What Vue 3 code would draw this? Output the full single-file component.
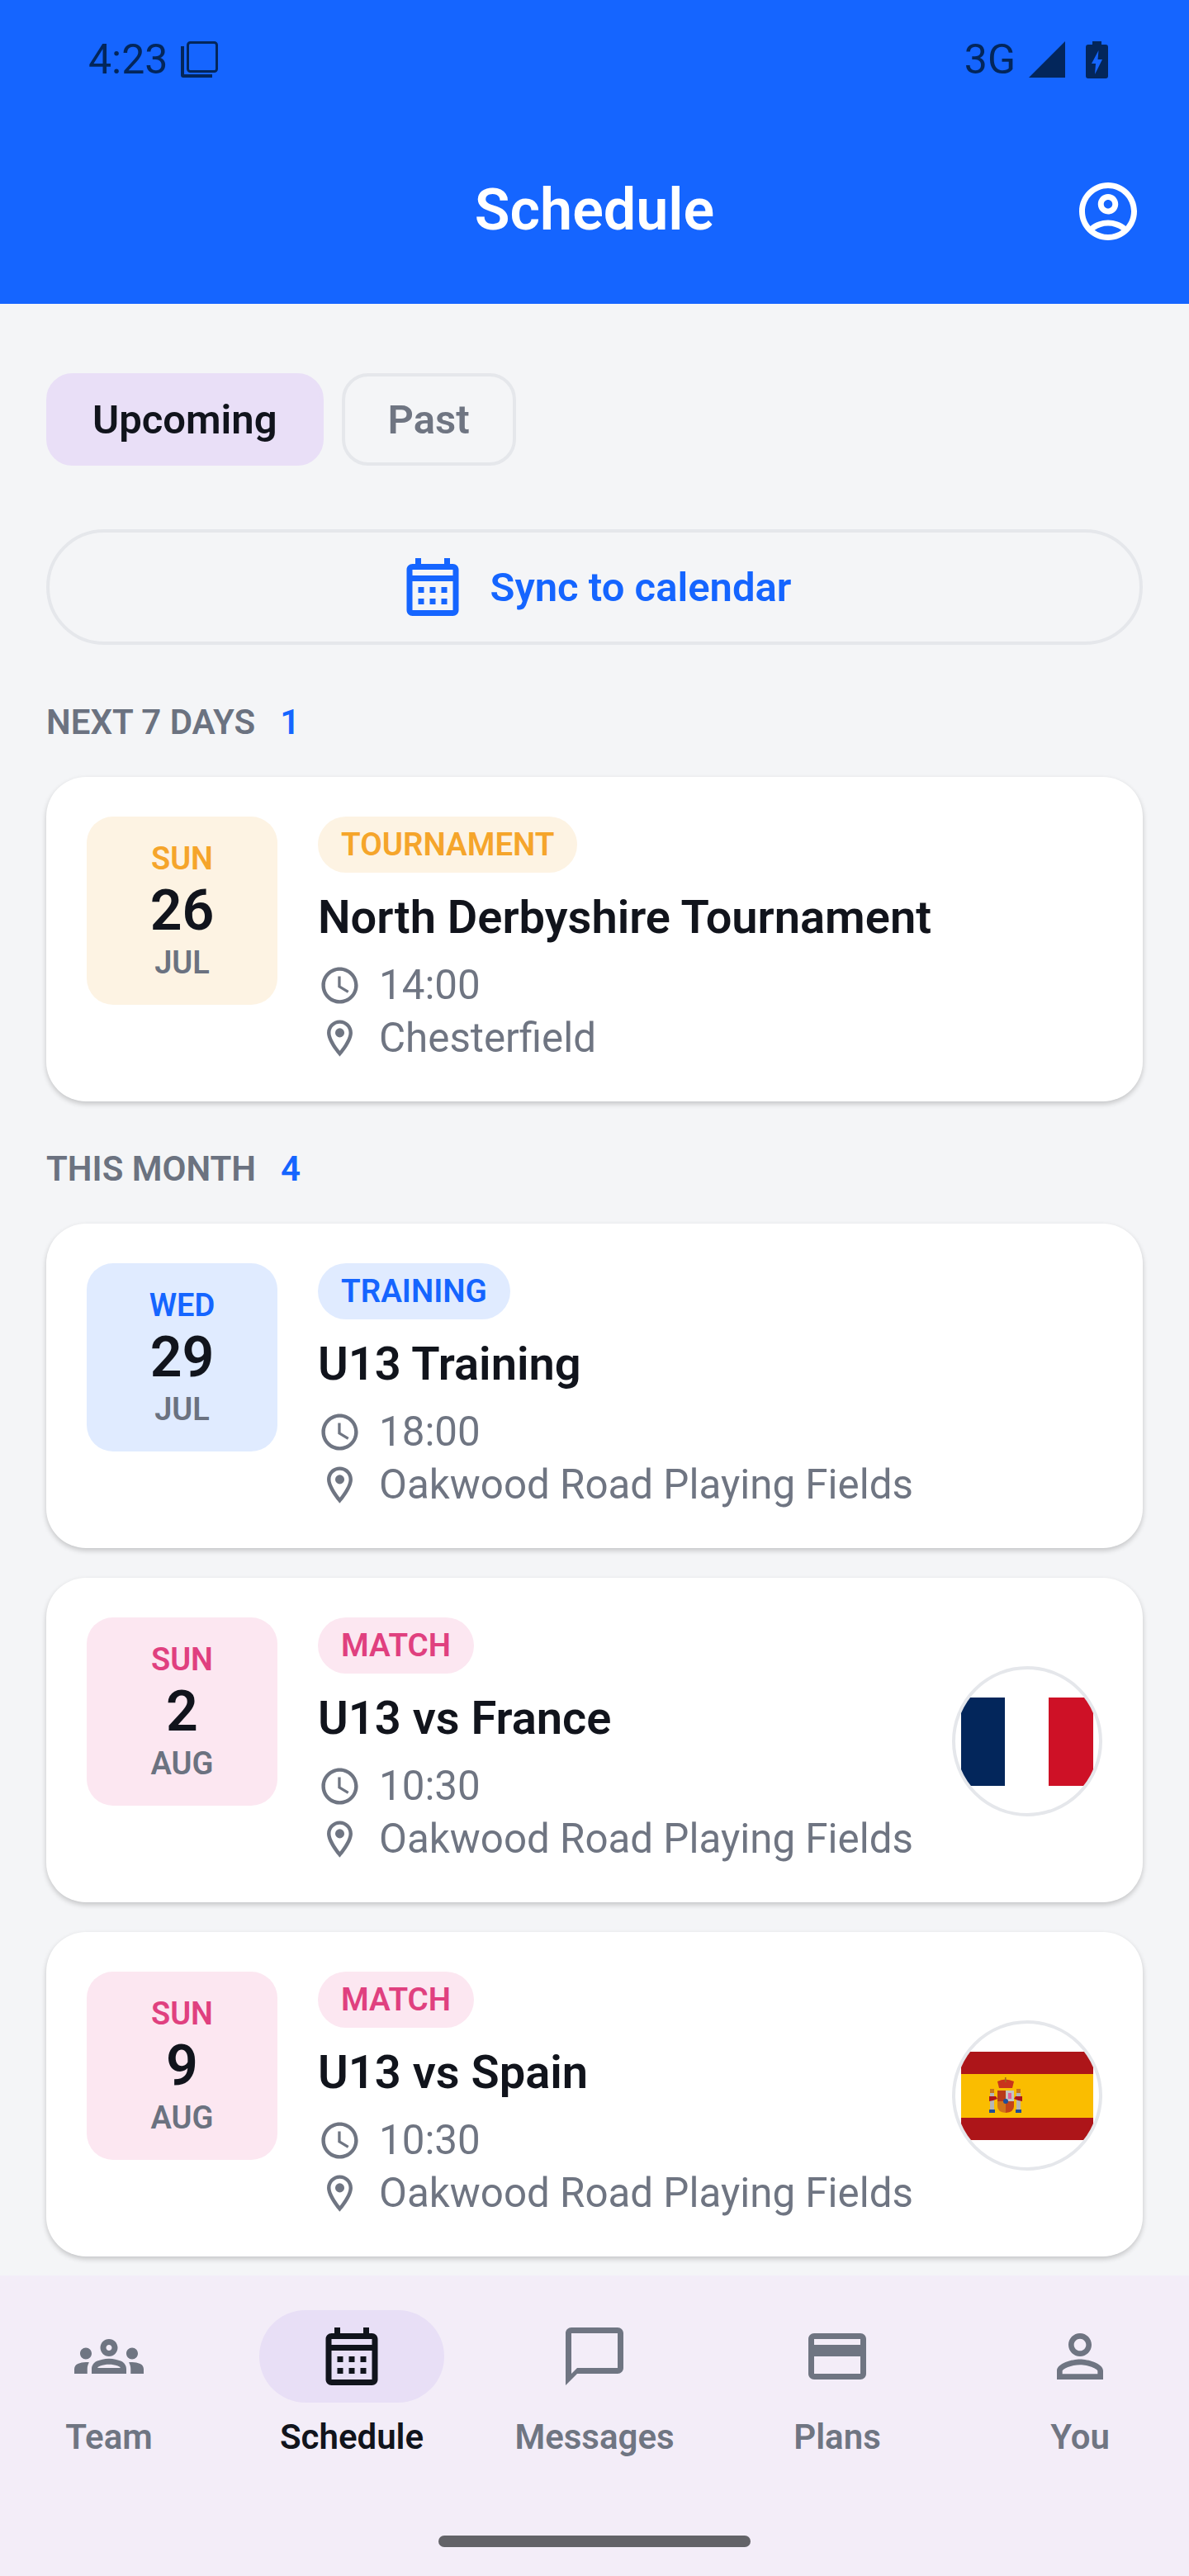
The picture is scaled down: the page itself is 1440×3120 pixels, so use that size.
<script setup>
const paths = {
  calendar: 'M19 4h-1V2h-2v2H8V2H6v2H5c-1.1 0-2 .9-2 2v14c0 1.1.9 2 2 2h14c1.1 0 2-.9 2-2V6c0-1.1-.9-2-2-2zm0 16H5V10h14v10zm0-12H5V6h14v2zM9 14H7v-2h2v2zm4 0h-2v-2h2v2zm4 0h-2v-2h2v2zm-8 4H7v-2h2v2zm4 0h-2v-2h2v2zm4 0h-2v-2h2v2z',
  account: 'M12 2C6.48 2 2 6.48 2 12s4.48 10 10 10 10-4.48 10-10S17.52 2 12 2zM7.35 18.5C8.66 17.56 10.26 17 12 17s3.34.56 4.65 1.5C15.34 19.44 13.74 20 12 20s-3.34-.56-4.65-1.5zm10.79-1.38C16.45 15.8 14.32 15 12 15s-4.45.8-6.14 2.12C4.7 15.73 4 13.95 4 12c0-4.42 3.58-8 8-8s8 3.58 8 8c0 1.95-.7 3.73-1.86 5.12zM12 6c-1.93 0-3.5 1.57-3.5 3.5S10.07 13 12 13s3.5-1.57 3.5-3.5S13.93 6 12 6zm0 5c-.83 0-1.5-.67-1.5-1.5S11.17 8 12 8s1.5.67 1.5 1.5S12.83 11 12 11z',
  clock: 'M11.99 2C6.47 2 2 6.48 2 12s4.47 10 9.99 10C17.52 22 22 17.52 22 12S17.52 2 11.99 2zM12 20c-4.42 0-8-3.58-8-8s3.58-8 8-8 8 3.58 8 8-3.58 8-8 8zM12.5 7H11v6l5.25 3.15.75-1.23-4.5-2.67z',
  pin: 'M12 2C8.13 2 5 5.13 5 9c0 5.25 7 13 7 13s7-7.75 7-13c0-3.87-3.13-7-7-7zM7 9c0-2.76 2.24-5 5-5s5 2.24 5 5c0 2.88-2.88 7.19-5 9.88C9.92 16.21 7 11.85 7 9zM12 6.5a2.5 2.5 0 1 0 0 5 2.5 2.5 0 0 0 0-5z',
  groups: 'M4 13c1.1 0 2-.9 2-2 0-1.1-.9-2-2-2s-2 .9-2 2c0 1.1.9 2 2 2zm1.13 1.1C4.76 14.04 4.39 14 4 14c-.99 0-1.93.21-2.78.58C.48 14.9 0 15.62 0 16.43V18h4.5v-1.61c0-.83.23-1.61.63-2.29zM20 13c1.1 0 2-.9 2-2 0-1.1-.9-2-2-2s-2 .9-2 2c0 1.1.9 2 2 2zm4 3.43c0-.81-.48-1.53-1.22-1.85C21.93 14.21 20.99 14 20 14c-.39 0-.76.04-1.13.1.4.68.63 1.46.63 2.29V18H24v-1.57zm-7.76-2.78c-1.17-.52-2.61-.9-4.24-.9s-3.07.39-4.24.9C6.68 14.13 6 15.21 6 16.39V18h12v-1.61c0-1.18-.68-2.26-1.76-2.74zM8.07 16c.09-.23.13-.39.91-.69.97-.38 1.99-.56 3.02-.56s2.05.18 3.02.56c.77.3.81.46.91.69H8.07zM12 8c.55 0 1 .45 1 1s-.45 1-1 1-1-.45-1-1 .45-1 1-1m0-2c-1.66 0-3 1.34-3 3s1.34 3 3 3 3-1.34 3-3-1.34-3-3-3z',
  chat: 'M20 2H4c-1.1 0-2 .9-2 2v18l4-4h14c1.1 0 2-.9 2-2V4c0-1.1-.9-2-2-2zm0 14H6l-2 2V4h16v12z',
  card: 'M20 4H4c-1.11 0-1.99.89-1.99 2L2 18c0 1.11.89 2 2 2h16c1.11 0 2-.89 2-2V6c0-1.11-.89-2-2-2zm0 14H4v-6h16v6zm0-10H4V6h16v2z',
  person: 'M12 5.9c1.16 0 2.1.94 2.1 2.1s-.94 2.1-2.1 2.1S9.9 9.16 9.9 8s.94-2.1 2.1-2.1m0 9c2.97 0 6.1 1.46 6.1 2.1v1.1H5.9V17c0-.64 3.13-2.1 6.1-2.1M12 4C9.79 4 8 5.79 8 8s1.79 4 4 4 4-1.79 4-4-1.79-4-4-4zm0 9c-2.67 0-8 1.34-8 4v3h16v-3c0-2.66-5.33-4-8-4z'
}

const sections = [
  {
    label: 'NEXT 7 DAYS',
    count: 1,
    events: [
      { day: 'SUN', num: 26, month: 'JUL', kind: 'tournament', tag: 'TOURNAMENT', title: 'North Derbyshire Tournament', time: '14:00', place: 'Chesterfield' }
    ]
  },
  {
    label: 'THIS MONTH',
    count: 4,
    events: [
      { day: 'WED', num: 29, month: 'JUL', kind: 'training', tag: 'TRAINING', title: 'U13 Training', time: '18:00', place: 'Oakwood Road Playing Fields' },
      { day: 'SUN', num: 2, month: 'AUG', kind: 'match', tag: 'MATCH', title: 'U13 vs France', time: '10:30', place: 'Oakwood Road Playing Fields', flag: 'fr' },
      { day: 'SUN', num: 9, month: 'AUG', kind: 'match', tag: 'MATCH', title: 'U13 vs Spain', time: '10:30', place: 'Oakwood Road Playing Fields', flag: 'es' }
    ]
  }
]

const tabs = [
  { label: 'Team', icon: 'groups' },
  { label: 'Schedule', icon: 'calendar', active: true },
  { label: 'Messages', icon: 'chat' },
  { label: 'Plans', icon: 'card' },
  { label: 'You', icon: 'person' }
]
</script>

<template>
  <div class="screen">
    <header class="top">
      <div class="status">
        <div class="status-side">
          <span>4:23</span>
          <svg class="shot-icon" viewBox="0 0 45 44">
            <rect x="8.5" y="1.5" width="35" height="35" rx="3" fill="none" stroke="currentColor" stroke-width="3" />
            <path d="M0 6h4v34h34v4H3a3 3 0 0 1-3-3z" fill="currentColor" />
          </svg>
        </div>
        <div class="status-side">
          <span>3G</span>
          <svg class="signal-icon" viewBox="0 0 44 44"><path d="M44 0v44H0z" fill="currentColor" /></svg>
          <svg class="battery-icon" viewBox="0 0 27 45">
            <path d="M8 0h11v4h5a3 3 0 0 1 3 3v35a3 3 0 0 1-3 3H3a3 3 0 0 1-3-3V7a3 3 0 0 1 3-3h5z" fill="currentColor" />
            <path d="M15.5 11 7 27h5l-1 13 9-18h-5.500z" fill="#1565ff" />
          </svg>
        </div>
      </div>
      <div class="title-row">
        <h1>Schedule</h1>
        <svg class="profile" viewBox="0 0 24 24"><path :d="paths.account" fill="currentColor" /></svg>
      </div>
    </header>

    <main class="content">
      <div class="filters">
        <button class="chip chip-on">Upcoming</button>
        <button class="chip">Past</button>
      </div>

      <button class="sync">
        <svg viewBox="0 0 24 24"><path :d="paths.calendar" fill="currentColor" /></svg>
        Sync to calendar
      </button>

      <section v-for="section in sections" :key="section.label" class="section">
        <div class="section-head">
          <span>{{ section.label }}</span>
          <span class="count">{{ section.count }}</span>
        </div>
        <div class="list">
          <article v-for="ev in section.events" :key="ev.title" class="card">
            <div class="date" :class="ev.kind">
              <span class="date-day">{{ ev.day }}</span>
              <span class="date-num">{{ ev.num }}</span>
              <span class="date-month">{{ ev.month }}</span>
            </div>
            <div class="info">
              <span class="tag" :class="ev.kind">{{ ev.tag }}</span>
              <h2>{{ ev.title }}</h2>
              <div class="meta">
                <svg viewBox="0 0 24 24"><path :d="paths.clock" fill="currentColor" /></svg>
                {{ ev.time }}
              </div>
              <div class="meta">
                <svg viewBox="0 0 24 24"><path :d="paths.pin" fill="currentColor" fill-rule="evenodd" /></svg>
                {{ ev.place }}
              </div>
            </div>
            <div v-if="ev.flag" class="flag">
              <svg v-if="ev.flag === 'fr'" viewBox="0 0 160 107" width="160" height="107">
                <rect width="54" height="107" fill="#03265b" />
                <rect x="53" width="54" height="107" fill="#fff" />
                <rect x="106" width="54" height="107" fill="#ce1126" />
              </svg>
              <svg v-else viewBox="0 0 160 107" width="160" height="107">
                <rect width="160" height="107" fill="#ad1519" />
                <rect y="27" width="160" height="53" fill="#fabd00" />
                <rect x="35" y="46" width="5" height="28" fill="#b5b5b5" />
                <rect x="67" y="46" width="5" height="28" fill="#b5b5b5" />
                <rect x="35" y="45" width="5" height="5" fill="#c8761a" />
                <rect x="67" y="45" width="5" height="5" fill="#c8761a" />
                <rect x="34" y="70" width="7" height="4" fill="#1f4e9a" />
                <rect x="66" y="70" width="7" height="4" fill="#1f4e9a" />
                <path d="M34 54h8l2 3-5 2-5 1zM74 54h-8l-2 3 5 2 5 1z" fill="#ad1519" />
                <path d="M44 36q9-5 20 0l-2 8H46z" fill="#c8351c" />
                <rect x="53" y="31" width="1.500" height="6" fill="#a06a1a" />
                <path d="M44 47h10v13H44z" fill="#b83a1a" />
                <path d="M54 47h10v13H54z" fill="#c4c4c4" />
                <path d="M44 60h10v14q-10-1-10-8z" fill="#d0741a" />
                <path d="M54 60h10v6q0 7-10 8z" fill="#c2431a" />
                <path d="M57 50h4v7h-4z" fill="#e0609a" />
                <circle cx="54" cy="60" r="3" fill="#1f4e9a" />
              </svg>
            </div>
          </article>
        </div>
      </section>
    </main>

    <nav class="tabs">
      <div class="tab-row">
        <div v-for="tab in tabs" :key="tab.label" class="tab" :class="{ active: tab.active }">
          <div class="tab-pill">
            <svg viewBox="0 0 24 24"><path :d="paths[tab.icon]" fill="currentColor" /></svg>
          </div>
          <span>{{ tab.label }}</span>
        </div>
      </div>
      <div class="home-bar"></div>
    </nav>
  </div>
</template>

<style>
body {
  margin: 0;
  background: #f4f5f7;
}
</style>

<style scoped>
.screen {
  width: 1440px;
  height: 3120px;
  display: flex;
  flex-direction: column;
  overflow: hidden;
  background: #f4f5f7;
  font-family: Roboto, "Noto Sans", sans-serif;
  color: #11141c;
}

.top {
  height: 368px;
  box-sizing: border-box;
  background: #1565ff;
  color: #fff;
}

.status {
  height: 148px;
  box-sizing: border-box;
  padding: 49px 98px 0 107px;
  display: flex;
  justify-content: space-between;
  align-items: flex-start;
  color: #03265b;
  font-size: 50px;
  line-height: 46px;
}

.status-side {
  display: flex;
  align-items: center;
}

.shot-icon {
  width: 45px;
  height: 44px;
  margin-left: 16px;
}

.signal-icon {
  width: 44px;
  height: 44px;
  margin-left: 16px;
}

.battery-icon {
  width: 27px;
  height: 45px;
  margin-left: 25px;
}

.title-row {
  height: 220px;
  position: relative;
  display: flex;
  align-items: center;
  justify-content: center;
  box-sizing: border-box;
  padding-bottom: 8px;
}

h1 {
  margin: 0;
  font-size: 70px;
  font-weight: 600;
}

.profile {
  position: absolute;
  right: 56px;
  top: 66px;
  width: 84px;
  height: 84px;
}

.content {
  flex: 1;
  min-height: 0;
  padding: 84px 56px 0;
}

.filters {
  display: flex;
  gap: 22px;
}

button {
  font-family: inherit;
}

.chip {
  height: 112px;
  padding: 0 52px;
  box-sizing: border-box;
  border-radius: 32px;
  border: 4px solid #e5e7eb;
  background: transparent;
  color: #6f7582;
  font-size: 49px;
  font-weight: 600;
}

.chip-on {
  border-color: #e9dff7;
  background: #e9dff7;
  color: #11141c;
}

.sync {
  margin-top: 77px;
  width: 100%;
  height: 140px;
  box-sizing: border-box;
  border: 4px solid #e5e7eb;
  border-radius: 70px;
  background: transparent;
  display: flex;
  align-items: center;
  justify-content: center;
  gap: 28px;
  color: #1565ff;
  font-size: 49px;
  font-weight: 600;
}

.sync svg {
  width: 84px;
  height: 84px;
}

.section {
  margin-top: 70px;
}

.section + .section {
  margin-top: 58px;
}

.section-head {
  display: flex;
  gap: 30px;
  color: #6b7280;
  font-size: 42px;
  line-height: 48px;
  font-weight: 600;
}

.count {
  color: #1565ff;
}

.list {
  margin-top: 42px;
  display: flex;
  flex-direction: column;
  gap: 36px;
}

.card {
  height: 393px;
  box-sizing: border-box;
  padding: 48px 49px 0 49px;
  display: flex;
  gap: 49px;
  background: #fff;
  border-radius: 48px;
  box-shadow: 0 3px 6px rgba(0, 0, 0, 0.2);
}

.date {
  width: 231px;
  height: 228px;
  flex-shrink: 0;
  border-radius: 32px;
  display: flex;
  flex-direction: column;
  align-items: center;
  justify-content: center;
}

.date-day,
.date-month {
  font-size: 38px;
  line-height: 50px;
  font-weight: 600;
}

.date-num {
  color: #11141c;
  font-size: 68px;
  line-height: 76px;
  font-weight: 600;
}

.date-month {
  color: #6b7280;
}

.tournament.date {
  background: #fdf3e3;
}

.training.date {
  background: #e0ebff;
}

.match.date {
  background: #fce7f1;
}

.tournament {
  color: #f5a52b;
}

.training {
  color: #1565ff;
}

.match {
  color: #e0407f;
}

.info {
  flex: 1;
  min-width: 0;
}

.tag {
  display: inline-block;
  height: 68px;
  padding: 0 28px;
  border-radius: 34px;
  font-size: 38.500px;
  line-height: 68px;
  font-weight: 600;
  vertical-align: top;
}

.tag.tournament {
  background: #fdf3e3;
}

.tag.training {
  background: #e0ebff;
}

.tag.match {
  background: #fce7f1;
}

h2 {
  margin: 18px 0 14px;
  font-size: 56px;
  line-height: 72px;
  font-weight: 600;
  color: #11141c;
}

.meta {
  display: flex;
  align-items: center;
  gap: 21px;
  height: 64px;
  color: #6f7582;
  font-size: 49.300px;
  white-space: nowrap;
}

.meta svg {
  width: 53px;
  height: 53px;
  flex-shrink: 0;
}

.flag {
  width: 182px;
  height: 182px;
  box-sizing: border-box;
  flex-shrink: 0;
  margin-top: 59px;
  border: 4px solid #e5e7eb;
  border-radius: 50%;
  overflow: hidden;
  background: #fff;
  display: flex;
  align-items: center;
  justify-content: center;
}

.flag svg {
  flex-shrink: 0;
}

.tabs {
  height: 364px;
  box-sizing: border-box;
  padding: 42px 20px 0;
  background: #f3edf8;
  position: relative;
}

.tab-row {
  display: flex;
  justify-content: space-between;
}

.tab {
  width: 224px;
  display: flex;
  flex-direction: column;
  align-items: center;
  color: #6f7582;
  font-size: 42px;
  line-height: 48px;
  font-weight: 600;
}

.tab-pill {
  width: 224px;
  height: 112px;
  border-radius: 56px;
  display: flex;
  align-items: center;
  justify-content: center;
  margin-bottom: 18px;
}

.tab-pill svg {
  width: 84px;
  height: 84px;
}

.tab.active {
  color: #11141c;
}

.tab.active .tab-pill {
  background: #e8dff6;
}

.home-bar {
  position: absolute;
  left: 531px;
  top: 315px;
  width: 378px;
  height: 14px;
  border-radius: 7px;
  background: #636368;
}
</style>
